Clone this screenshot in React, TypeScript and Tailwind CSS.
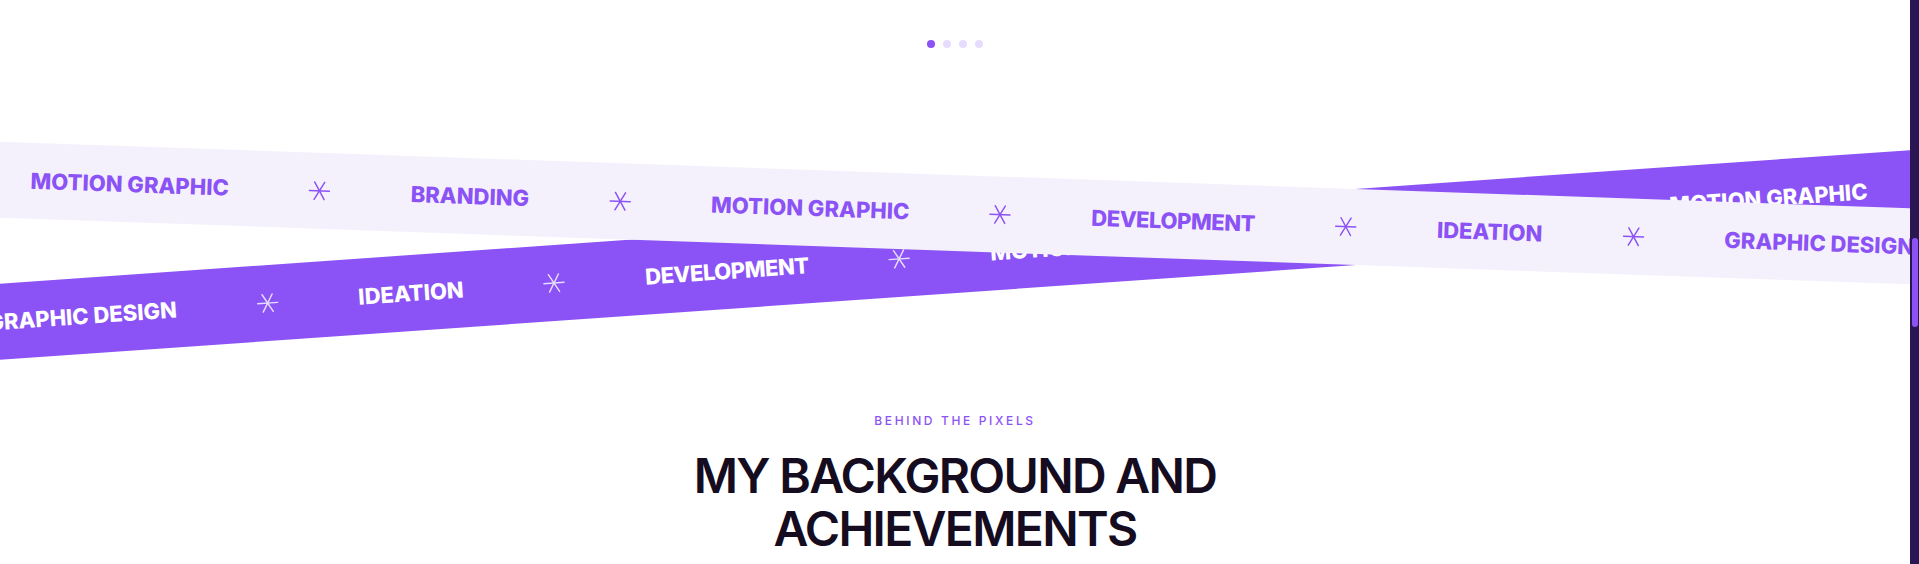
const lightItems = ['MOTION GRAPHIC', 'BRANDING', 'MOTION GRAPHIC', 'DEVELOPMENT', 'IDEATION', 'GRAPHIC DESIGN', 'MOTION GRAPHIC', 'BRANDING']
const purpleItems = ['GRAPHIC DESIGN', 'IDEATION', 'DEVELOPMENT', 'MOTION GRAPHIC', 'BRANDING', 'MOTION GRAPHIC', 'DEVELOPMENT']

function Star({ className }: { className?: string }) {
  return (
    <svg viewBox="0 0 24 24" className={className} fill="none" stroke="currentColor" strokeWidth="1.6" strokeLinecap="round">
      <path d="M1 12H23" />
      <path d="M6.5 2.5L17.5 21.5" />
      <path d="M17.5 2.5L6.5 21.5" />
    </svg>
  )
}

function Band({ items, dark }: { items: string[]; dark?: boolean }) {
  return (
    <div className="flex items-center gap-20">
      {items.map((item, i) => (
        <div key={i} className="flex items-center gap-20 shrink-0">
          {i > 0 && <Star className={dark ? 'w-[22px] h-[22px] text-[#e6dcff]' : 'w-[22px] h-[22px] text-[#8b52f5]'} />}
          <span className={item === 'DEVELOPMENT' ? 'whitespace-nowrap tracking-[-0.02em]' : 'whitespace-nowrap'}>{item}</span>
        </div>
      ))}
    </div>
  )
}

export default function App() {
  return (
    <div className="flex h-[564px] w-full overflow-hidden bg-white">
      <main className="flex-1 flex flex-col items-center overflow-hidden font-['Inter',sans-serif]">
        <div className="mt-[40px] flex gap-2">
          <span className="w-2 h-2 rounded-full bg-[#8b52f5]" />
          <span className="w-2 h-2 rounded-full bg-[#e6dcfd]" />
          <span className="w-2 h-2 rounded-full bg-[#e6dcfd]" />
          <span className="w-2 h-2 rounded-full bg-[#e6dcfd]" />
        </div>

        <section className="mt-[127px] w-full grid grid-cols-1">
          <div className="[grid-area:1/1] justify-self-center w-[2110px] mt-[42px] h-[76px] flex items-center pl-[85px] bg-[#8b52f5] text-white font-extrabold text-[22px] rotate-[-4deg]">
            <Band items={purpleItems} dark />
          </div>
          <div className="[grid-area:1/1] justify-self-center w-[2110px] h-[76px] flex items-center pl-[130px] bg-[#f5f1fc] text-[#8b52f5] font-extrabold text-[22px] rotate-[2deg]">
            <Band items={lightItems} />
          </div>
        </section>

        <p className="mt-[120px] text-[12px] leading-4 font-medium tracking-[0.22em] text-[#8b52f5]">BEHIND THE PIXELS</p>
        <h2 className="mt-[20px] text-center text-[48px] leading-[53px] font-semibold tracking-[-0.035em] text-[#150c1f]">
          MY BACKGROUND AND
          <br />
          ACHIEVEMENTS
        </h2>
      </main>
      <div className="w-[9px] shrink-0 bg-[#2b1654] pt-[238px] pl-[2px]">
        <div className="w-[6px] h-[89px] rounded-full bg-[#8b52f5]" />
      </div>
    </div>
  )
}
